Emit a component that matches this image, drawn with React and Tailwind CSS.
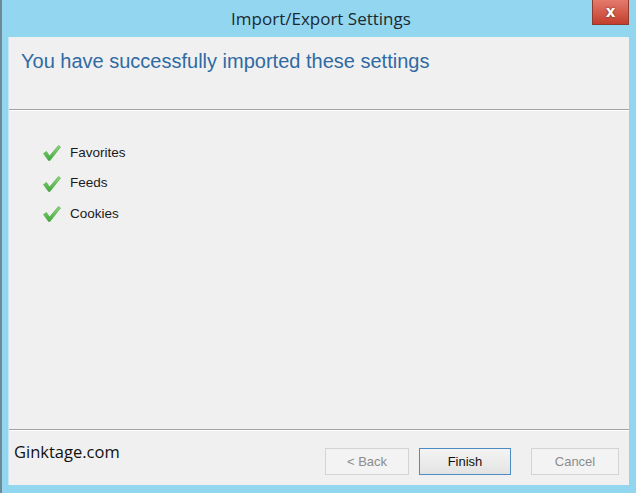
import React from "react";

const items = ["Favorites", "Feeds", "Cookies"];

const Check = () => (
  <svg width="20" height="18" viewBox="0 0 20 18" className="shrink-0">
    <defs>
      <linearGradient id="chk" x1="0" y1="0" x2="0" y2="1">
        <stop offset="0" stopColor="#8fdc7c" />
        <stop offset="1" stopColor="#3fa63a" />
      </linearGradient>
    </defs>
    <path
      d="M1.5 9.5 L4.5 7.5 L7.5 12 L16.5 1.5 L18.5 3 L8 16.5 L6.5 16.5 Z"
      fill="url(#chk)"
      stroke="#4aa146"
      strokeWidth="0.6"
      strokeLinejoin="round"
    />
  </svg>
);

const App = () => {
  return (
    <div className="w-[636px] h-[493px] bg-[#93d6f0] flex flex-col border-l-2 border-[#6f8a96] overflow-hidden">
      <div className="relative h-[37px] shrink-0 flex items-center justify-center">
        <span className="text-[17px] text-[#1b2a30] pl-[4px]" style={{ fontFamily: "'Open Sans', 'Liberation Sans', sans-serif" }}>
          Import/Export Settings
        </span>
        <div className="absolute right-[7px] top-0 w-[37px] h-[25px] bg-gradient-to-b from-[#e37a6c] to-[#c33d2c] border border-[#8e3b30] border-t-0 flex items-center justify-center">
          <span className="text-white font-bold text-[15px] leading-none" style={{ fontFamily: "'DejaVu Sans', sans-serif", textShadow: "0 0 2px #5a1a12" }}>x</span>
        </div>
      </div>
      <div className="flex-1 ml-[6px] mr-[7px] mb-[8px] bg-[#f0f0f0] flex flex-col border-l border-[#c6e6f3]">
        <div className="h-[72px] shrink-0 pl-[12px] pt-[9px]">
          <h1 className="text-[20px] text-[#2f6aa3]" style={{ fontFamily: "'Liberation Sans', Arial, sans-serif" }}>
            You have successfully imported these settings
          </h1>
        </div>
        <div className="h-px bg-[#a3a3a3]" />
        <div className="h-px bg-white" />
        <div className="flex-1 pl-[33px] pt-[33px] flex flex-col gap-[12.5px]" style={{ fontFamily: "'Liberation Sans', Arial, sans-serif" }}>
          {items.map((item) => (
            <div key={item} className="flex items-center gap-[8px] h-[18px]">
              <Check />
              <span className="text-[13.5px] text-[#1a1a1a]">{item}</span>
            </div>
          ))}
        </div>
        <div className="h-px bg-[#a3a3a3]" />
        <div className="h-px bg-white" />
        <div className="h-[54px] shrink-0 flex items-start pl-[5px] pr-[10px]">
          <span className="text-[16.5px] text-[#111] mt-[9px]" style={{ fontFamily: "'Open Sans', 'Liberation Sans', sans-serif" }}>
            Ginktage.com
          </span>
          <div className="ml-auto flex gap-[10px] mt-[17px]" style={{ fontFamily: "'Liberation Sans', Arial, sans-serif" }}>
            <button className="w-[84px] h-[27px] border border-[#d4d4d4] bg-[#f3f3f3] text-[13px] text-[#8c8c8c]">
              &lt; Back
            </button>
            <button className="w-[92px] h-[27px] border border-[#4d8cc2] bg-gradient-to-b from-[#f4f4f4] to-[#e3e3e3] text-[13px] text-[#111] mr-[10px]">
              Finish
            </button>
            <button className="w-[88px] h-[27px] border border-[#d4d4d4] bg-[#f3f3f3] text-[13px] text-[#8c8c8c]">
              Cancel
            </button>
          </div>
        </div>
      </div>
    </div>
  );
};

export default App;
